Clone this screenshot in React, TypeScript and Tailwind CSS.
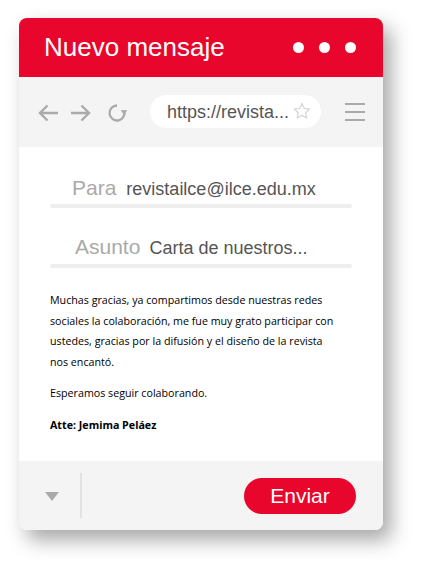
export default function App() {
  return (
    <div className="w-[421px] h-[568px] bg-white pt-[18px] pl-[19px]" style={{ fontFamily: "'Liberation Sans', Arial, sans-serif" }}>
      {/* card */}
      <div className="w-[364px] rounded-[8px] overflow-hidden bg-white shadow-[8px_10px_20px_rgba(0,0,0,0.35)]">
        {/* header */}
        <div className="h-[59px] bg-[#e8062c] flex items-center justify-between pl-[25px] pr-[27px]">
          <h1 className="text-[26px] text-white leading-none pb-[1px]">Nuevo mensaje</h1>
          <div className="flex gap-[15px]">
            <span className="w-[11px] h-[11px] rounded-full bg-white" />
            <span className="w-[11px] h-[11px] rounded-full bg-white" />
            <span className="w-[11px] h-[11px] rounded-full bg-white" />
          </div>
        </div>

        {/* toolbar */}
        <div className="h-[70px] bg-[#f4f4f4] flex items-center pl-[19px] pr-[18px]">
          <svg width="21" height="18" viewBox="0 0 21 18" className="mt-[1px]">
            <path d="M20 9H2M9.5 1.5L2 9l7.5 7.5" fill="none" stroke="#aaaaaa" strokeWidth="2.4" />
          </svg>
          <svg width="21" height="18" viewBox="0 0 21 18" className="ml-[11px] mt-[1px]">
            <path d="M1 9h18M11.5 1.5L19 9l-7.5 7.5" fill="none" stroke="#aaaaaa" strokeWidth="2.4" />
          </svg>
          <svg width="23" height="22" viewBox="0 0 23 22" className="ml-[15px] mt-[1px]">
            <path d="M11 3.5A7.5 7.5 0 1 0 18.05 8.43" fill="none" stroke="#aaaaaa" strokeWidth="2.3" />
            <path d="M14.6 8.2h6.8l-3.4 4.2z" fill="#aaaaaa" />
          </svg>
          <div className="ml-[21px] w-[171px] h-[33px] rounded-full bg-white flex items-center pl-[17px] pr-[10px] mt-[-1px]">
            <span className="text-[18px] text-[#555555] leading-none">https://revista...</span>
            <svg width="19" height="18" viewBox="0 0 24 23" className="ml-[4px] mt-[-1px]">
              <path d="M12 1.5l3.1 6.6 7.2.8-5.4 4.9 1.5 7.1L12 17.3l-6.4 3.6 1.5-7.1L1.7 8.9l7.2-.8z" fill="none" stroke="#d6d6d6" strokeWidth="1.7" strokeLinejoin="round" />
            </svg>
          </div>
          <div className="ml-auto flex flex-col gap-[6px] w-[20px]">
            <span className="h-[2px] bg-[#aaaaaa]" />
            <span className="h-[2px] bg-[#aaaaaa]" />
            <span className="h-[2px] bg-[#aaaaaa]" />
          </div>
        </div>

        {/* body */}
        <div className="h-[314px] bg-white px-[31px] pt-[28px]">
          <div className="flex items-baseline pl-[22px] h-[26px]">
            <span className="text-[21px] text-[#aaaaaa] leading-[26px]">Para</span>
            <span className="text-[18px] text-[#555555] ml-[10px] leading-[26px]">revistailce@ilce.edu.mx</span>
          </div>
          <div className="h-[4px] rounded-full bg-[#eeeeee] mt-[3px]" />

          <div className="flex items-baseline pl-[25px] h-[26px] mt-[26px]">
            <span className="text-[21px] text-[#aaaaaa] leading-[26px]">Asunto</span>
            <span className="text-[18px] text-[#555555] ml-[9px] leading-[26px]">Carta de nuestros...</span>
          </div>
          <div className="h-[4px] rounded-full bg-[#eeeeee] mt-[4px]" />

          <div className="pt-[22px] text-[10.7px] leading-[20.7px] text-black pr-[10px]" style={{ fontFamily: "'Open Sans', sans-serif" }}>
            <p>
              Muchas gracias, ya compartimos desde nuestras redes<br />sociales la colaboración, me fue muy grato participar con<br />ustedes, gracias por la difusión y el diseño de la revista<br />nos encantó.
            </p>
            <p className="mt-[10px]">Esperamos seguir colaborando.</p>
            <p className="mt-[11px] font-bold">Atte: Jemima Peláez</p>
          </div>
        </div>

        {/* footer */}
        <div className="h-[69px] bg-[#f4f4f4] flex items-center pl-[26px] pr-[27px]">
          <span className="w-0 h-0 border-l-[7px] border-r-[7px] border-t-[9px] border-l-transparent border-r-transparent border-t-[#aaaaaa] mt-[2px]" />
          <span className="w-[2px] h-[45px] bg-[#e2e2e2] ml-[21px]" />
          <button className="ml-auto w-[112px] h-[36px] rounded-full bg-[#e8062c] text-white text-[21px] leading-none pb-[1px]">
            Enviar
          </button>
        </div>
      </div>
    </div>
  );
}
